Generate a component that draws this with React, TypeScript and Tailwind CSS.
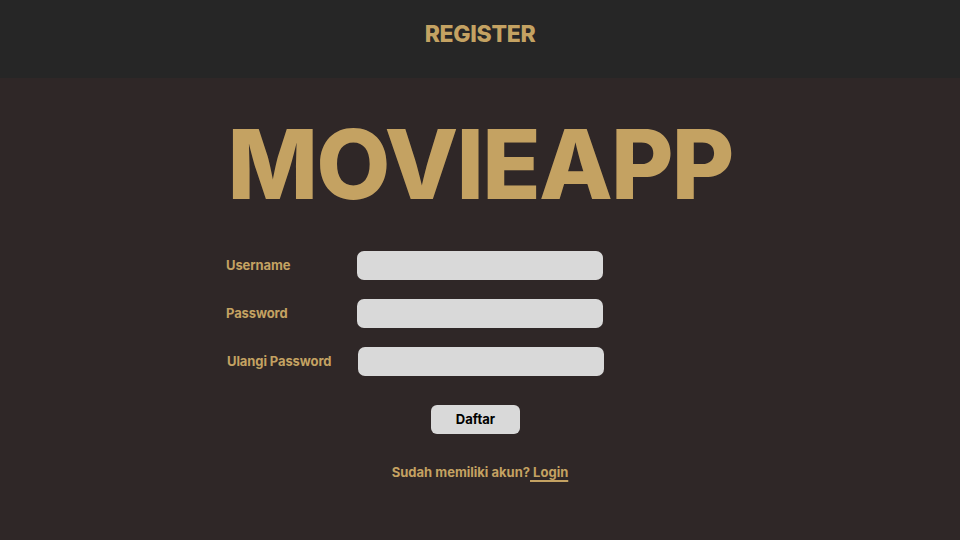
export default function App() {
  const font = { fontFamily: "Inter, 'Noto Sans', sans-serif" };
  return (
    <div className="w-[960px] h-[540px] flex flex-col bg-[#2f2727] overflow-hidden" style={font}>
      <header className="h-[78px] bg-[#262626] flex items-center justify-center shrink-0">
        <h1 className="text-[23px] font-extrabold text-[#c4a262] leading-none tracking-[-0.3px] -mt-[10px]">REGISTER</h1>
      </header>
      <main className="flex flex-col items-center flex-1">
        <div className="mt-[38px] text-[96px] font-extrabold leading-none text-[#c4a262] tracking-[-1.8px]">MOVIEAPP</div>
        <form className="self-start ml-[226px] mt-[39px] flex flex-col gap-[19px]">
          <div className="flex items-center">
            <label className="w-[131px] text-[13px] font-bold text-[#c4a262] tracking-[-0.1px]">Username</label>
            <input className="w-[246px] h-[29px] rounded-[7px] bg-[#d9d9d9] outline-none" />
          </div>
          <div className="flex items-center">
            <label className="w-[131px] text-[13px] font-bold text-[#c4a262] tracking-[-0.1px]">Password</label>
            <input type="password" className="w-[246px] h-[29px] rounded-[7px] bg-[#d9d9d9] outline-none" />
          </div>
          <div className="flex items-center pl-px">
            <label className="w-[131px] text-[13px] font-bold text-[#c4a262] tracking-[-0.1px]">Ulangi Password</label>
            <input type="password" className="w-[246px] h-[29px] rounded-[7px] bg-[#d9d9d9] outline-none" />
          </div>
        </form>
        <button className="mt-[29px] mr-[9px] w-[89px] h-[29px] rounded-[6px] bg-[#d9d9d9] text-[13px] font-bold text-black">Daftar</button>
        <p className="mt-[29px] text-[13px] font-bold text-[#c4a262]">
          Sudah memiliki akun?<a className="underline underline-offset-[3px] decoration-[1.5px]"> Login</a>
        </p>
      </main>
    </div>
  );
}
